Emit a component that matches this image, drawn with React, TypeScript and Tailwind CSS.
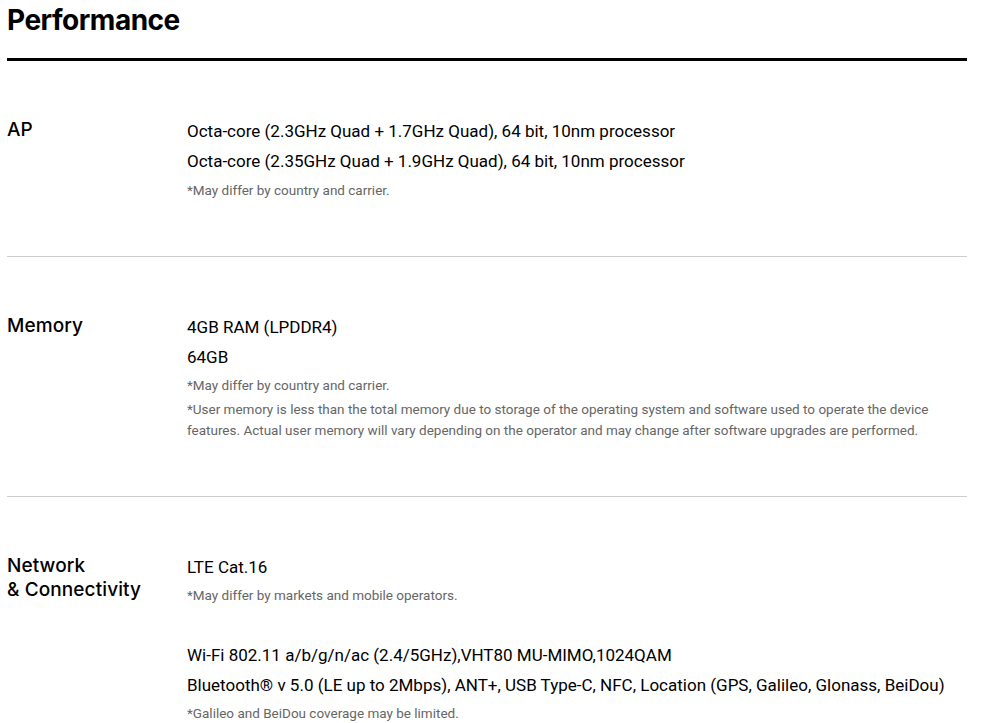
import React from "react";

const body = { fontFamily: 'Roboto, "Noto Sans", sans-serif' };
const head = { fontFamily: 'Inter, "Noto Sans", sans-serif' };

function Note({ children, mt }: { children: React.ReactNode; mt: string }) {
  return <p className={`${mt} text-[13.5px] leading-[21px] text-[#666]`}>{children}</p>;
}

function Line({ children }: { children: React.ReactNode }) {
  return <p className="text-[17px] leading-[30px] text-black">{children}</p>;
}

function Row({ label, children, last }: { label: React.ReactNode; children: React.ReactNode; last?: boolean }) {
  return (
    <div className={`flex pt-[55px] pb-[55px] ${last ? "" : "border-b border-[#cccccc]"}`}>
      <div className="w-[180px] shrink-0 pt-[2px] text-[19px] leading-[24px] font-medium tracking-[0.1px] text-black" style={head}>
        {label}
      </div>
      <div className="flex-1" style={body}>
        {children}
      </div>
    </div>
  );
}

export default function App() {
  return (
    <div className="bg-white min-h-screen">
      <div className="ml-[7px] w-[960px]">
        <h2 className="text-[28px] leading-[40px] font-bold tracking-[-0.5px] text-black pt-0 pb-[18px] border-b-[3px] border-black" style={head}>
          Performance
        </h2>
        <Row label="AP">
          <Line>Octa-core (2.3GHz Quad + 1.7GHz Quad), 64 bit, 10nm processor</Line>
          <Line>Octa-core (2.35GHz Quad + 1.9GHz Quad), 64 bit, 10nm processor</Line>
          <Note mt="mt-[4px]">*May differ by country and carrier.</Note>
        </Row>
        <Row label="Memory">
          <Line>4GB RAM (LPDDR4)</Line>
          <Line>64GB</Line>
          <Note mt="mt-[3px]">*May differ by country and carrier.</Note>
          <Note mt="mt-[3px]">
            *User memory is less than the total memory due to storage of the operating system and software used to operate the device features. Actual user memory will vary depending on the operator and may change after software upgrades are performed.
          </Note>
        </Row>
        <Row label={<>Network<br />&amp; Connectivity</>} last>
          <Line>LTE Cat.16</Line>
          <Note mt="mt-[3px]">*May differ by markets and mobile operators.</Note>
          <div className="mt-[34px]">
            <Line>Wi-Fi 802.11 a/b/g/n/ac (2.4/5GHz),VHT80 MU-MIMO,1024QAM</Line>
            <Line>Bluetooth® v 5.0 (LE up to 2Mbps), ANT+, USB Type-C, NFC, Location (GPS, Galileo, Glonass, BeiDou)</Line>
            <Note mt="mt-[3px]">*Galileo and BeiDou coverage may be limited.</Note>
          </div>
        </Row>
      </div>
    </div>
  );
}
